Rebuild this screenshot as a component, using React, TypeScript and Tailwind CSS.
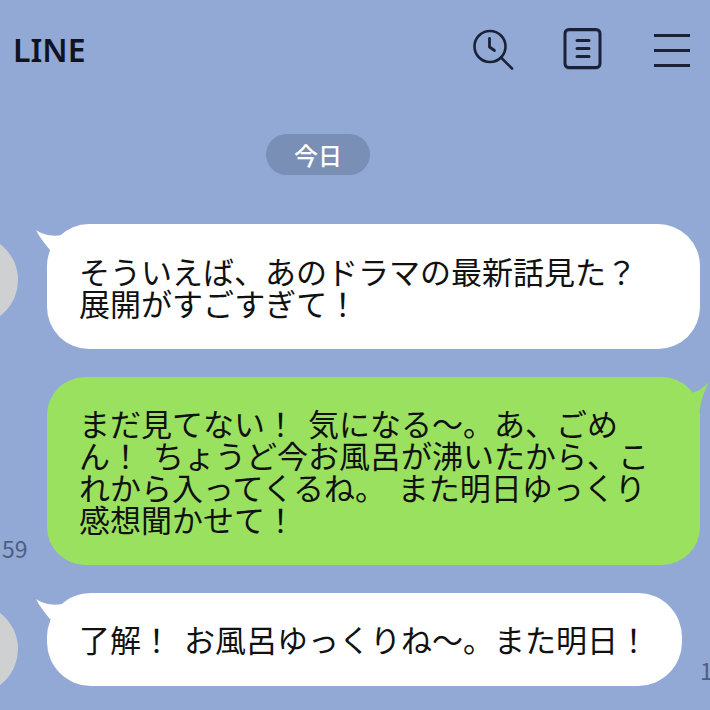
import { FC, ReactNode } from 'react';

const font = { fontFamily: '"Noto Sans CJK JP", "Liberation Sans", sans-serif' };

const HistoryIcon: FC = () => (
  <svg width="42" height="42" viewBox="0 0 42 42" fill="none" stroke="#1b2238" strokeLinecap="round" strokeLinejoin="round">
    <circle cx="18" cy="17.5" r="15.5" strokeWidth="2.6" />
    <path d="M17.5 9.5v8.5l5 3.5" strokeWidth="2.8" />
    <path d="M29 28.5l11 11" strokeWidth="2.6" />
  </svg>
);

const NoteIcon: FC = () => (
  <svg width="40" height="44" viewBox="0 0 40 44" fill="none" strokeLinecap="round" strokeLinejoin="round">
    <rect x="2" y="3" width="35" height="38" rx="4" stroke="#7683a8" strokeWidth="2" />
    <rect x="2" y="1.5" width="35" height="38" rx="4" stroke="#1b2238" strokeWidth="3" />
    <path d="M14 12.5h12M14 20.5h12M14 28.5h12" stroke="#1b2238" strokeWidth="3" />
  </svg>
);

const MenuIcon: FC = () => (
  <div className="flex w-[36px] flex-col gap-[12px]">
    <div className="h-[3px] bg-[#1b2238]" />
    <div className="h-[3px] bg-[#1b2238]" />
    <div className="h-[3px] bg-[#1b2238]" />
  </div>
);

const Avatar: FC = () => <div className="h-[90px] w-[90px] shrink-0 rounded-full bg-[#cfd0d2]" />;

const Incoming: FC<{ width: string; children: ReactNode; side?: ReactNode }> = ({ width, children, side }) => (
  <div className="flex w-full items-start">
    <div className="-ml-[72px] mt-[11px] shrink-0">
      <Avatar />
    </div>
    <div className={`relative ml-[29px] shrink-0 ${width}`}>
      {children}
      <svg className="absolute -left-[12px] top-[4px]" width="40" height="24" viewBox="0 0 40 24" fill="#ffffff">
        <path d="M1 2C7 6 16 9 27 7L30 22L15 22C10 16 5 10 1 2Z" />
      </svg>
    </div>
    {side}
  </div>
);

export default function App() {
  return (
    <div className="flex h-[710px] w-[710px] flex-col overflow-hidden bg-[#92a9d6]" style={font}>
      <header className="flex h-[102px] shrink-0 items-center pb-[2px] pl-[13px] pr-[20px]">
        <span className="text-[32px] font-semibold leading-none text-[#101322]" style={{ fontFamily: '"Noto Sans", sans-serif' }}>LINE</span>
        <div className="ml-auto flex items-center">
          <HistoryIcon />
          <div className="ml-[49px]"><NoteIcon /></div>
          <div className="ml-[51px]"><MenuIcon /></div>
        </div>
      </header>

      <div className="mt-[32px] flex justify-center pr-[74px]">
        <div className="flex h-[41px] w-[104px] items-center justify-center rounded-full bg-[#7a8fb5] text-[24px] font-medium text-white">今日</div>
      </div>

      <div className="mt-[49px]">
        <Incoming width="w-[653px]">
          <div className="relative flex h-[125px] flex-col justify-center rounded-[42px] bg-white pl-[32px] text-[31px] leading-[32px] text-[#111111]">
            <p className="whitespace-nowrap">そういえば、あのドラマの最新話見た？</p>
            <p className="whitespace-nowrap">展開がすごすぎて！</p>
          </div>
        </Incoming>
      </div>

      <div className="mt-[28px] flex">
        <div className="flex w-[47px] shrink-0 items-end justify-start pb-[4px] pl-[2px]">
          <span className="text-[23px] leading-[26px] text-[#4d5f80]">59</span>
        </div>
        <div className="relative w-[653px] shrink-0">
          <svg className="absolute -right-[10px] top-[4px]" width="40" height="30" viewBox="0 0 40 30" fill="#9ae160">
            <path d="M39 1C33 8 25 13 12 13L0 13L0 28L30 28C31 18 35 9 39 1Z" />
          </svg>
          <div className="relative flex h-[188px] flex-col justify-center rounded-[38px] bg-[#9ae160] pl-[32px] text-[31px] leading-[32px] text-[#111111] [word-spacing:5px]">
            <p className="whitespace-nowrap">まだ見てない！ 気になる～。あ、ごめ</p>
            <p className="whitespace-nowrap">ん！ ちょうど今お風呂が沸いたから、こ</p>
            <p className="whitespace-nowrap">れから入ってくるね。 また明日ゆっくり</p>
            <p className="whitespace-nowrap">感想聞かせて！</p>
          </div>
        </div>
      </div>

      <div className="mt-[28px] flex items-start">
        <Incoming
          width="w-[635px]"
          side={<span className="ml-[18px] mt-[64px] shrink-0 text-[23px] leading-[26px] text-[#4d5f80]">1</span>}>
          <div className="relative flex h-[93px] items-center rounded-[44px] bg-white pl-[32px] text-[31px] text-[#111111] [word-spacing:5px]">
            <p className="whitespace-nowrap">了解！ お風呂ゆっくりね～。また明日！</p>
          </div>
        </Incoming>
      </div>
    </div>
  );
}
